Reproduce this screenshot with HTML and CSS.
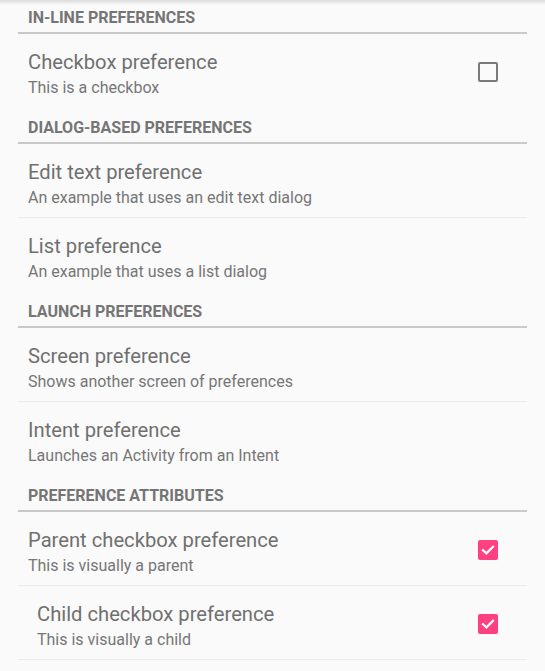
FILE: index.html
```html
<!DOCTYPE html>
<html>
<head>
<meta charset="utf-8">
<link rel="stylesheet" href="styles.css">
</head>
<body>
<div class="shadow"></div>
<div class="prefs">
  <section class="group">
    <h2 class="group-title">IN-LINE PREFERENCES</h2>
    <div class="item">
      <div class="text">
        <div class="title">Checkbox preference</div>
        <div class="summary">This is a checkbox</div>
      </div>
      <span class="checkbox"></span>
    </div>
  </section>
  <section class="group">
    <h2 class="group-title">DIALOG-BASED PREFERENCES</h2>
    <div class="item">
      <div class="text">
        <div class="title">Edit text preference</div>
        <div class="summary">An example that uses an edit text dialog</div>
      </div>
    </div>
    <div class="item">
      <div class="text">
        <div class="title">List preference</div>
        <div class="summary">An example that uses a list dialog</div>
      </div>
    </div>
  </section>
  <section class="group">
    <h2 class="group-title">LAUNCH PREFERENCES</h2>
    <div class="item">
      <div class="text">
        <div class="title">Screen preference</div>
        <div class="summary">Shows another screen of preferences</div>
      </div>
    </div>
    <div class="item">
      <div class="text">
        <div class="title">Intent preference</div>
        <div class="summary">Launches an Activity from an Intent</div>
      </div>
    </div>
  </section>
  <section class="group">
    <h2 class="group-title">PREFERENCE ATTRIBUTES</h2>
    <div class="item">
      <div class="text">
        <div class="title">Parent checkbox preference</div>
        <div class="summary">This is visually a parent</div>
      </div>
      <span class="checkbox checked"><svg viewBox="0 0 20 20" width="20" height="20"><path d="M5 10.2 L8.4 13.4 L15 6.8" fill="none" stroke="#fff" stroke-width="2.2" stroke-linecap="square"/></svg></span>
    </div>
    <div class="item item-child">
      <div class="text">
        <div class="title">Child checkbox preference</div>
        <div class="summary">This is visually a child</div>
      </div>
      <span class="checkbox checked"><svg viewBox="0 0 20 20" width="20" height="20"><path d="M5 10.2 L8.4 13.4 L15 6.8" fill="none" stroke="#fff" stroke-width="2.2" stroke-linecap="square"/></svg></span>
    </div>
  </section>
</div>
</body>
</html>
```

FILE: styles.css
```css
html, body {
  margin: 0;
  padding: 0;
  background: #fafafa;
}
body {
  font-family: Roboto, "Noto Sans", sans-serif;
  overflow: hidden;
  height: 671px;
}
.shadow {
  position: fixed;
  top: 0;
  left: 0;
  right: 0;
  height: 5px;
  background: linear-gradient(to bottom, rgba(0,0,0,0.12), rgba(0,0,0,0));
  z-index: 2;
}
.prefs {
  margin: -3px 18px 0 18px;
}
.group-title {
  margin: 0;
  padding: 11px 0 4px 10px;
  font-size: 16px;
  line-height: 20px;
  font-weight: 700;
  color: #757575;
  border-bottom: 2px solid #c9c9c9;
}
.item {
  display: flex;
  align-items: center;
  padding: 15px 29px 9px 10px;
  border-bottom: 1px solid #ececec;
}
.item:last-child {
  border-bottom: none;
}
.group:last-child .item:last-child {
  border-bottom: 1px solid #ececec;
}
.item-child {
  padding-left: 19px;
}
.text {
  flex: 1;
}
.title {
  font-size: 20.2px;
  line-height: 26px;
  color: #707070;
}
.summary {
  margin-top: 3px;
  font-size: 16px;
  line-height: 20px;
  color: #767676;
}
.checkbox {
  width: 20px;
  height: 20px;
  box-sizing: border-box;
  border: 2px solid #7a7a7a;
  border-radius: 2px;
  margin-top: -3px;
}
.checkbox.checked {
  border: none;
  background: #ff4081;
}
.checkbox svg {
  display: block;
}
```
